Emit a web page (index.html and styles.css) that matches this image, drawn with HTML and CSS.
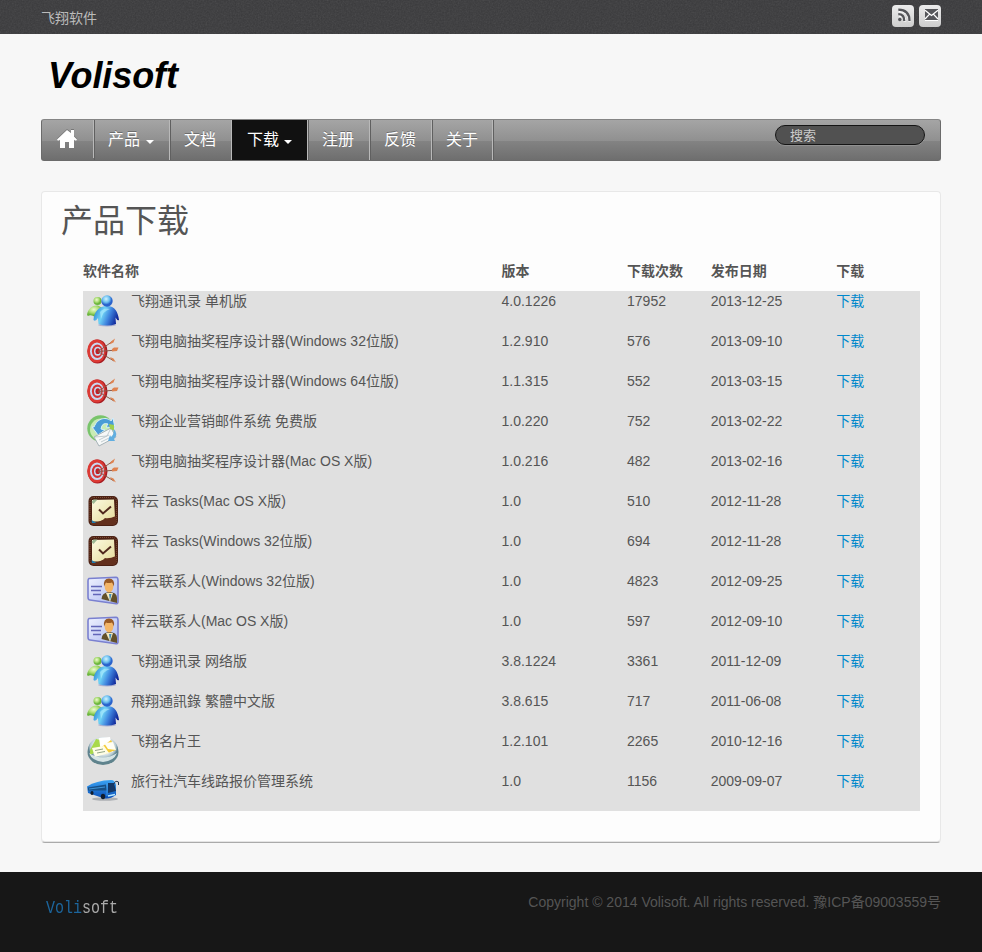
FILE: index.html
```html
<!DOCTYPE html>
<html lang="zh-CN">
<head>
<meta charset="utf-8">
<title>飞翔软件</title>
<link rel="stylesheet" href="styles.css">
</head>
<body>
<svg class="defs" aria-hidden="true">
  <defs>
    <radialGradient id="gGreen" cx=".4" cy=".35"><stop offset="0" stop-color="#eefad0"/><stop offset=".6" stop-color="#aadd74"/><stop offset="1" stop-color="#6bb53c"/></radialGradient>
    <radialGradient id="gBlue" cx=".42" cy=".32"><stop offset="0" stop-color="#d2f4ff"/><stop offset=".6" stop-color="#6cc0f0"/><stop offset="1" stop-color="#2a63cc"/></radialGradient>
    <linearGradient id="gBody" x1="0" y1=".3" x2="1" y2=".6"><stop offset="0" stop-color="#2c86da"/><stop offset=".35" stop-color="#6fd3f5"/><stop offset=".62" stop-color="#3f84de"/><stop offset="1" stop-color="#0a1c92"/></linearGradient>
    <linearGradient id="gCard" x1="0" y1="0" x2="1" y2="1"><stop offset="0" stop-color="#f0f3ff"/><stop offset="1" stop-color="#a9b6ef"/></linearGradient>
    <linearGradient id="gPaper" x1="0" y1="0" x2="1" y2="1"><stop offset="0" stop-color="#fcfae0"/><stop offset="1" stop-color="#e6dc9c"/></linearGradient>
    <linearGradient id="gBus" x1="0" y1="0" x2="0" y2="1"><stop offset="0" stop-color="#3aa3f3"/><stop offset="1" stop-color="#0b4fb8"/></linearGradient>
    <radialGradient id="gDisc" cx=".5" cy=".35"><stop offset=".5" stop-color="#fff"/><stop offset=".85" stop-color="#b4c8cf"/><stop offset="1" stop-color="#5f838f"/></radialGradient>
  </defs>
  <symbol id="people" viewBox="0 0 32 32">
    <path d="M0 20C1 13 6 10 11 10.500L17 14 12 20 8 22Q4 19 1 21Z" fill="url(#gGreen)"/>
    <circle cx="10.500" cy="6" r="4" fill="url(#gGreen)"/>
    <ellipse cx="20" cy="30" rx="9" ry="1.500" fill="#777fc0" opacity=".5"/>
    <path d="M6.500 25C7 17 12 11 20 11S31 17 32 25Q30.500 26 28.500 22.500L29 29Q20 32 11.500 29L11 23Q8.500 27 6.500 25Z" fill="url(#gBody)"/>
    <path d="M13 17Q17 12 23 14Q16 16 14 24Z" fill="#b6f0ff" opacity=".6"/>
    <circle cx="20" cy="6" r="5.700" fill="url(#gBlue)"/>
  </symbol>
  <symbol id="target" viewBox="0 0 32 32">
    <ellipse cx="10.500" cy="16.500" rx="10" ry="12" fill="#a71b22"/>
    <ellipse cx="9.500" cy="16" rx="9.300" ry="11.600" fill="#dc3a35"/>
    <ellipse cx="10" cy="16.200" rx="7" ry="8.800" fill="#c8d8f2"/>
    <ellipse cx="10.300" cy="16.200" rx="5.400" ry="6.800" fill="#d33235"/>
    <ellipse cx="10.600" cy="16.200" rx="3.600" ry="4.500" fill="#c8d8f2"/>
    <ellipse cx="10.800" cy="16.200" rx="2.300" ry="2.900" fill="#bd2027"/>
    <path d="M11 16.500 26 6M11 16.500 30 15M11 16.500 27 26" stroke="#8b5a4b" stroke-width="1"/>
    <path d="m22.500 9.500 1.500-3 4-3-1.500 4zM25 14l2-1.500h4.500L30 16l-5 .500zM23 22l3.500 1.500 2.500 4-4-2.500z" fill="#df8350"/>
  </symbol>
  <symbol id="mail" viewBox="0 0 32 32">
    <circle cx="13.500" cy="13.500" r="13.200" fill="#79c46b"/><circle cx="14" cy="14.500" r="11" fill="#c8ebb4"/>
    <path d="M7 12C11 2 20 2 24 6l2-3 2 10-9-1 2-3Q15 7 14 14l4 1-7 5-6-8Z" fill="#4a9cd6" stroke="#d8f0fb"/>
    <path d="m7 22 17-9 5 9-17 9z" fill="#f6f8f8" stroke="#a8b4b9"/>
    <path d="m8 22 12-1 4-8M12 25l10-5M14 27l10-5" fill="none" stroke="#b5c0c5" stroke-width=".8"/>
    <path d="M26 13q6 6 1 11l1 2-7 0 2-6 1 2q4-3 2-9Z" fill="#61aee0"/>
    <path d="m22 9 5 1 0 5-4-1z" fill="#9fd04d"/>
  </symbol>
  <symbol id="tasks" viewBox="0 0 32 32">
    <rect x="1.500" y="1" width="29.500" height="30" rx="5" fill="#4c2114"/>
    <rect x="3" y="2.500" width="26.500" height="27" rx="4" fill="none" stroke="#8d5a3b" stroke-width=".8" stroke-dasharray="1 1"/>
    <path d="m5 5 22-.500 1 18-9 2-7 2H5Z" fill="url(#gPaper)"/>
    <path d="M4 27q10 1 14-4 4 1 11-2v7q-1 2-3 2H7q-3 0-3-3Z" fill="#63301d"/>
    <path d="m4.500 25 5 3H5z" fill="#207eb0"/>
    <path d="m12 14.500 4 4 8-7" fill="none" stroke="#51291e" stroke-width="2"/>
    <path d="m4.500 7 2-2.500h4L6.500 9z" fill="#9db994"/>
  </symbol>
  <symbol id="contact" viewBox="0 0 32 32">
    <path d="M2 3.500 29 2.200q2 0 2 3v21.500q0 2-2 2L3 25q-2 0-2-3V6q0-2 1-2.500Z" fill="url(#gCard)" stroke="#7a80d0" stroke-width="1.600"/>
    <path d="M4 11.500h11M4 15.500h10M6 19.500h8" stroke="#6266b8" stroke-width="1.700"/>
    <path d="M14.500 24q0-6 7.500-7 8 0 8 6v5z" fill="#62502a"/>
    <path d="m19 18 4 9 3-9z" fill="#f5e9c1"/><path d="m22 19 1 7 1.500-7z" fill="#428dbb"/>
    <ellipse cx="22" cy="11.500" rx="4.300" ry="6" fill="#f3b568"/>
    <path d="M17 11.500q-1-8 5-8 6 0 5 8l-2-4q-4 1-6 0Z" fill="#9a5a24"/>
  </symbol>
  <symbol id="cards" viewBox="0 0 32 32">
    <ellipse cx="16" cy="17" rx="15.500" ry="13" fill="#5f838c"/>
    <ellipse cx="16" cy="15" rx="15" ry="13" fill="url(#gDisc)"/>
    <path d="M3 15 9 4l5 1 1 9-12 6z" fill="#a8d94a"/>
    <path d="m12 3 11-1 3 15-12 1z" fill="#fff"/>
    <path d="m12 14 12-9 5 10-11 4z" fill="#f4cb36"/>
    <path d="m17 8 9-1 3 8-8-1z" fill="#fffef4"/>
    <path d="m5 13 12-2 5 7-14 4z" fill="#fffde6"/>
    <path d="m8 15.500 8-1.500M10 18l8-1.500" stroke="#91a584"/>
    <path d="M2 18q14 9 28 0-3 8-14 9Q5 26 2 18Z" fill="#e3eeee" opacity=".9"/>
  </symbol>
  <symbol id="bus" viewBox="0 0 32 32">
    <ellipse cx="18" cy="24" rx="13" ry="1.800" fill="#8b8f96" opacity=".6"/>
    <path d="M0 11.500Q9 5.500 24 5q4 0 5 5v10q-7 5-13 3L1 18Z" fill="url(#gBus)"/>
    <path d="m1 12.500 18-3 1 6L1 15.500z" fill="#175087"/><path d="m21 8 6 0 2 8-8 2z" fill="#153866"/>
    <path d="m20 8 0 13M2 14l16-2" fill="none" stroke="#49a4ea" stroke-width=".8"/>
    <path d="M27 9q1-4 4.500-2v3" fill="none" stroke="#26364e"/>
    <ellipse cx="5" cy="18" rx="1.600" ry="2" fill="#111d2e"/><ellipse cx="16" cy="21.500" rx="2.200" ry="2.700" fill="#111d2e"/>
    <path d="m21 21 7-1.500" stroke="#b9e8ff" stroke-width="1.300"/>
  </symbol>
</svg>

<header class="topbar">
  <svg class="grain" aria-hidden="true"><filter id="noise"><feTurbulence type="fractalNoise" baseFrequency=".65" numOctaves="2" stitchTiles="stitch"/><feColorMatrix type="saturate" values="0"/></filter><rect width="100%" height="100%" filter="url(#noise)"/></svg>
  <div class="container topbar-inner">
    <span>飞翔软件</span>
    <div class="social">
      <a class="social-link"><svg width="22" height="22" viewBox="0 0 22 22"><g fill="none" stroke="#fff" stroke-width="2.4" transform="translate(.5 1)"><path d="M6.500 9.500q6 0 6 6M6.500 5q10.500 0 10.500 10.500"/></g><g fill="none" stroke="#55565a" stroke-width="2.300"><path d="M6.300 9.200q6 0 6 6.700M6.300 4.600Q17.500 4.800 17.500 15.900"/></g><circle cx="7.800" cy="14.500" r="1.700" fill="#55565a"/></svg></a>
      <a class="social-link"><svg width="22" height="22" viewBox="0 0 22 22"><path d="M6 5h13v11H6z" fill="#fff"/><path d="M6 4h13v11H6z" fill="#55565a"/><path d="m6 5.200 6.500 5.200L19 5.200M6 14l4.400-4.600M19 14l-4.400-4.600" fill="none" stroke="#fff" stroke-width="1.300"/></svg></a>
    </div>
  </div>
</header>

<div class="container">
  <div class="brand">Volisoft</div>
  <nav class="navbar">
    <a class="nav-item home"><svg width="20" height="19" viewBox="0 0 20 19"><path d="M10 0 0 9.500l1 1.200 2-1V18h5v-6h4v6h5V9.700l2 1 1-1.200-3-3V0h-3v3z" fill="#fff"/></svg></a>
    <a class="nav-item drop">产品<i class="caret"></i></a>
    <a class="nav-item">文档</a>
    <a class="nav-item drop active">下载<i class="caret"></i></a>
    <a class="nav-item">注册</a>
    <a class="nav-item">反馈</a>
    <a class="nav-item last">关于</a>
    <div class="nav-rest"><input class="search" type="text" placeholder="搜索"></div>
  </nav>

  <main class="panel">
    <h1>产品下载</h1>
    <div class="table">
      <div class="row head"><span>软件名称</span><span>版本</span><span>下载次数</span><span>发布日期</span><span>下载</span></div>
      <div class="row"><span class="name"><svg class="icon"><use href="#people"/></svg>飞翔通讯录 单机版</span><span>4.0.1226</span><span>17952</span><span>2013-12-25</span><a>下载</a></div>
      <div class="row"><span class="name"><svg class="icon"><use href="#target"/></svg>飞翔电脑抽奖程序设计器(Windows 32位版)</span><span>1.2.910</span><span>576</span><span>2013-09-10</span><a>下载</a></div>
      <div class="row"><span class="name"><svg class="icon"><use href="#target"/></svg>飞翔电脑抽奖程序设计器(Windows 64位版)</span><span>1.1.315</span><span>552</span><span>2013-03-15</span><a>下载</a></div>
      <div class="row"><span class="name"><svg class="icon"><use href="#mail"/></svg>飞翔企业营销邮件系统 免费版</span><span>1.0.220</span><span>752</span><span>2013-02-22</span><a>下载</a></div>
      <div class="row"><span class="name"><svg class="icon"><use href="#target"/></svg>飞翔电脑抽奖程序设计器(Mac OS X版)</span><span>1.0.216</span><span>482</span><span>2013-02-16</span><a>下载</a></div>
      <div class="row"><span class="name"><svg class="icon"><use href="#tasks"/></svg>祥云 Tasks(Mac OS X版)</span><span>1.0</span><span>510</span><span>2012-11-28</span><a>下载</a></div>
      <div class="row"><span class="name"><svg class="icon"><use href="#tasks"/></svg>祥云 Tasks(Windows 32位版)</span><span>1.0</span><span>694</span><span>2012-11-28</span><a>下载</a></div>
      <div class="row"><span class="name"><svg class="icon"><use href="#contact"/></svg>祥云联系人(Windows 32位版)</span><span>1.0</span><span>4823</span><span>2012-09-25</span><a>下载</a></div>
      <div class="row"><span class="name"><svg class="icon"><use href="#contact"/></svg>祥云联系人(Mac OS X版)</span><span>1.0</span><span>597</span><span>2012-09-10</span><a>下载</a></div>
      <div class="row"><span class="name"><svg class="icon"><use href="#people"/></svg>飞翔通讯录 网络版</span><span>3.8.1224</span><span>3361</span><span>2011-12-09</span><a>下载</a></div>
      <div class="row"><span class="name"><svg class="icon"><use href="#people"/></svg>飛翔通訊錄 繁體中文版</span><span>3.8.615</span><span>717</span><span>2011-06-08</span><a>下载</a></div>
      <div class="row"><span class="name"><svg class="icon"><use href="#cards"/></svg>飞翔名片王</span><span>1.2.101</span><span>2265</span><span>2010-12-16</span><a>下载</a></div>
      <div class="row"><span class="name"><svg class="icon"><use href="#bus"/></svg>旅行社汽车线路报价管理系统</span><span>1.0</span><span>1156</span><span>2009-09-07</span><a>下载</a></div>
    </div>
  </main>
</div>

<footer class="footer">
  <div class="container footer-inner">
    <div class="footer-logo"><span>Voli</span>soft</div>
    <div class="copyright">Copyright © 2014 Volisoft. All rights reserved. 豫ICP备09003559号</div>
  </div>
</footer>
</body>
</html>
```
FILE: styles.css
```css
* { box-sizing: border-box; }
body {
  margin: 0;
  background: #f7f7f7;
  color: #555;
  font: 14px/20px "Liberation Sans", "Noto Sans CJK SC", sans-serif;
}
.defs { position: absolute; width: 0; height: 0; }
.container { width: 900px; margin: 0 auto; }

.topbar { position: relative; height: 34px; background: #39393b; overflow: hidden; }
.grain { position: absolute; inset: 0; width: 100%; height: 100%; opacity: .13; }
.topbar-inner { position: relative; display: flex; justify-content: space-between; padding-top: 5px; color: #bbb; }
.topbar-inner > span { padding-top: 3px; }
.social { display: flex; gap: 5px; }
.social-link {
  width: 22px;
  height: 22px;
  border-radius: 4px;
  background: linear-gradient(#ececec, #cdcdcd);
}
.social-link svg { display: block; }

.brand {
  height: 85px;
  padding: 21px 0 0 7px;
  color: #000;
  font: italic bold 36px/42px "Liberation Sans", sans-serif;
  letter-spacing: -.1px;
}

.navbar {
  display: flex;
  height: 42px;
  border: 1px solid #6b6b6b;
  border-top-color: #858585;
  border-radius: 3px;
  background: linear-gradient(#a5a5a5 0, #909090 52%, #838383 53%, #6e6e6e 100%);
}
.nav-item {
  display: flex;
  flex: none;
  align-items: center;
  width: 62px;
  height: 40px;
  padding: 0 0 1px 13px;
  border-left: 1px solid #606060;
  border-right: 1px solid #b9b9b9;
  color: #fff;
  font-size: 16px;
  text-shadow: 0 -1px 0 rgba(0, 0, 0, .3);
}
.home { width: 52px; height: 38px; padding: 1px 0 0 15px; border-left: 0; }
.home svg { filter: drop-shadow(0 -1px 0 #777); }
.drop { width: 76px; }
.active { padding-left: 14px; border-left-color: #111; background: #111; }
.caret {
  margin: 5px 0 0 6px;
  border: 4px solid transparent;
  border-top-color: #fff;
  border-bottom: 0;
}
.active .caret { margin-left: 5px; }
.last { width: 61px; }
.nav-rest {
  display: flex;
  flex: 1;
  justify-content: flex-end;
  padding: 5px 15px 0 0;
  border-left: 1px solid #606060;
}
.search {
  width: 150px;
  height: 20px;
  padding: 0 14px;
  border: 1px solid #151515;
  border-radius: 10px;
  background: #515151;
  box-shadow: 0 1px 0 rgba(255, 255, 255, .15);
  color: #ccc;
  font: 13px/18px "Liberation Sans", "Noto Sans CJK SC", sans-serif;
}
.search::placeholder { color: #ccc; opacity: 1; }

.panel {
  height: 652px;
  margin-top: 30px;
  padding: 9px 20px 0 19px;
  border: 1px solid #e8e8e8;
  border-bottom: 1px solid #aaa;
  border-radius: 4px;
  background: #fdfdfd;
  box-shadow: inset 0 -1px 0 #e5e5e5;
}
h1 { margin: 0 0 20px; font-size: 32px; font-weight: 400; line-height: 40px; }
.table { width: 837px; margin-left: 22px; }
.row {
  display: grid;
  grid-template-columns: 50% 15% 10% 15% 10%;
  height: 40px;
  background: #e0e0e0;
}
.head { height: 30px; background: none; font-weight: bold; }
.name { display: flex; }
.icon { width: 32px; height: 32px; margin: 4px 12px 0 4px; }
.row a { color: #0088cc; }

.footer { height: 80px; margin-top: 29px; background: #171717; }
.footer-inner { display: flex; justify-content: space-between; padding-top: 20px; }
.footer-logo {
  padding: 6px 0 0 6px;
  color: #aaa;
  font: 18px/20px "Liberation Mono", monospace;
  transform: scaleX(.833);
  transform-origin: 0 0;
}
.footer-logo span { color: #1c659c; }
.copyright { color: #555; }
```
